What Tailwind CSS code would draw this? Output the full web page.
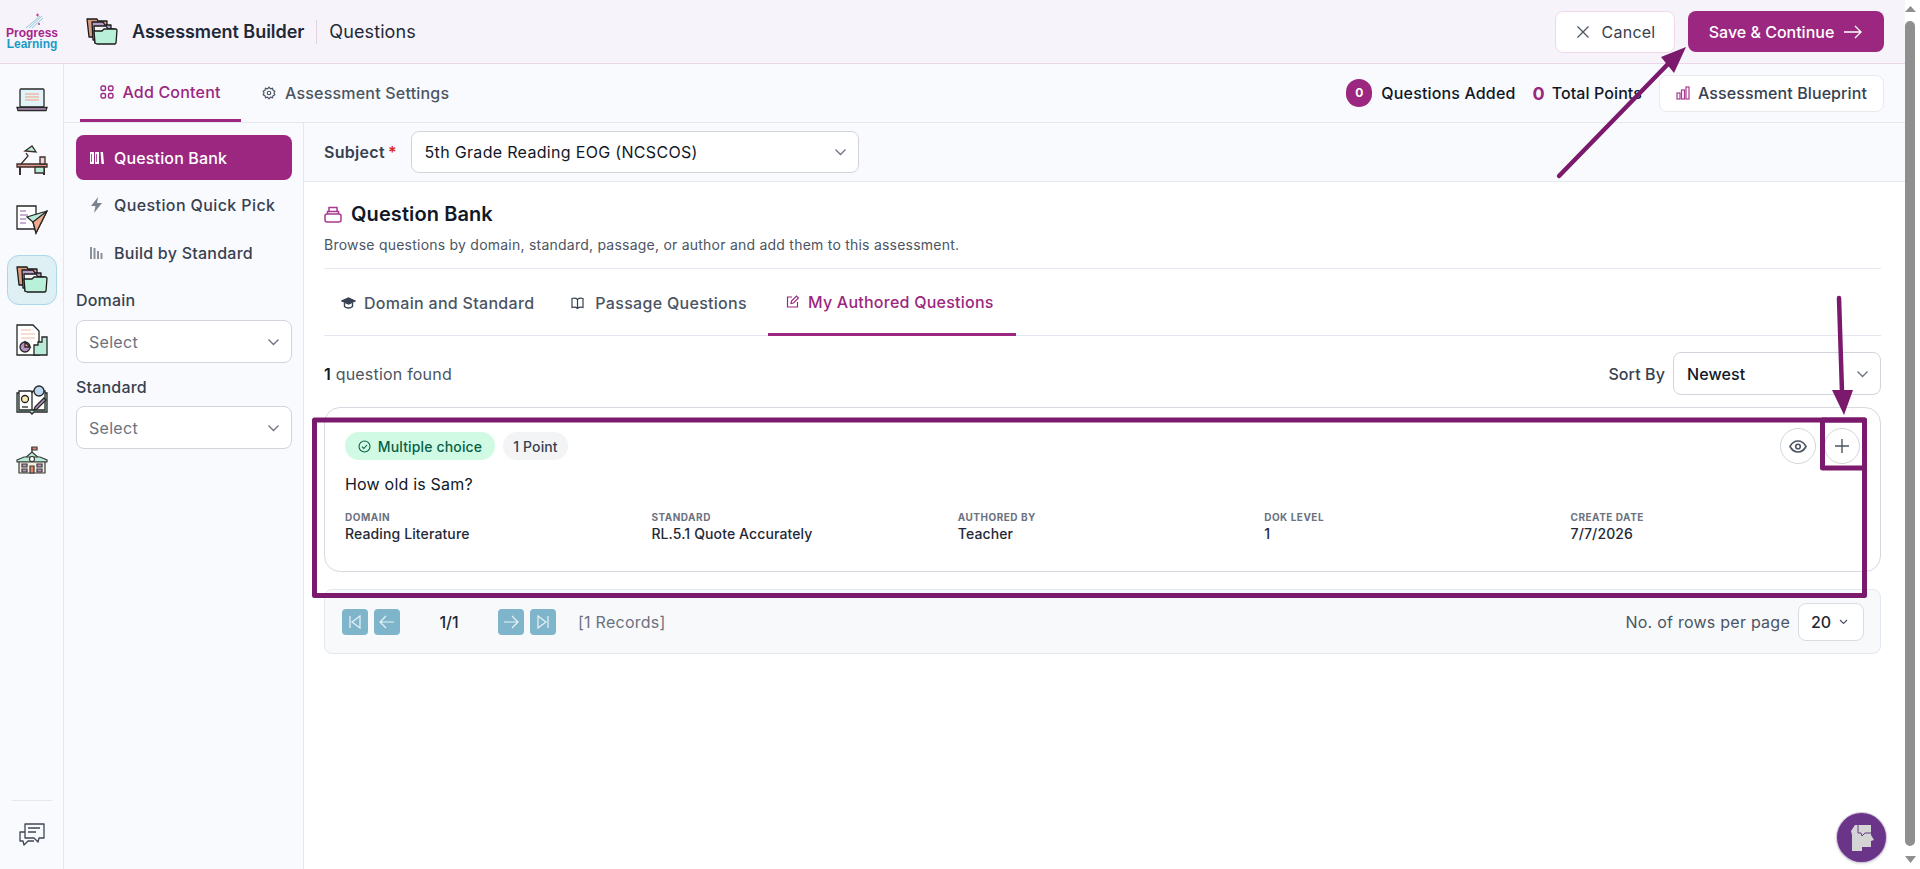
<!DOCTYPE html>
<html lang="en">
<head>
<meta charset="utf-8">
<title>Assessment Builder</title>
<script src="https://cdn.jsdelivr.net/npm/@tailwindcss/browser@4"></script>
</head>
<body class="font-['Inter',sans-serif] text-[#1f2937] bg-white">
<div class="relative flex w-[1920px] h-[869px] overflow-hidden">
  <div class="w-[1905px] h-[869px] flex flex-col">
    <!-- Header -->
    <header class="h-[64px] shrink-0 flex items-center justify-between pr-[21px] bg-[#f6f4fa] border-b border-[#ecd5e8]">
      <div class="flex items-center">
        <div class="relative w-[64px] h-[63px] flex flex-col items-center justify-end pb-[13px] font-['Liberation_Sans',sans-serif] font-bold text-[12px] leading-[11px]">
          <svg class="absolute left-[25px] top-[13px]" width="20" height="16" viewBox="0 0 20 16" fill="none"><path d="M1 15 15 3M4 15 17 3M7 15 18 5" stroke="#8fc7dc" stroke-width="1"/><path d="M11 2h3M12.500 .5v3" stroke="#c0399f" stroke-width="1"/><circle cx="14" cy="11" r="1" fill="#c0399f"/></svg>
          <span class="text-[#a8248c]">Progress</span>
          <span class="text-[#169cc6]">Learning</span>
        </div>
        <svg class="ml-[22px]" width="32" height="28" viewBox="0 0 32 28" fill="none" stroke="#1b1b1b" stroke-width="1.300" stroke-linejoin="round"><path d="M1 1h10l1 2h9v16H3z" fill="#d89a7c"/><path d="M6 4h11l2 3h6v15H7z" fill="#b69ac8"/><path d="M8 8h12l2 3h6v14H9z" fill="#f4f4f4"/><path d="M8 13h8l2-2h12l1 1-1 13-1 1H11l-2-1z" fill="#b9f0da"/></svg>
        <span class="ml-[14px] text-[18px] font-semibold tracking-[-0.05px] text-[#1f2937]">Assessment Builder</span>
        <span class="ml-[12px] w-px h-[24px] bg-[#e6d3e2]"></span>
        <span class="ml-[12px] text-[18px] tracking-[0.1px] text-[#1f2937]">Questions</span>
      </div>
      <div class="flex items-center gap-[13px]">
        <button class="w-[120px] h-[42px] rounded-lg bg-white border border-[#f0d8ec] flex items-center justify-center gap-[11px] text-[16px] tracking-[0.25px] text-[#374151]">
          <svg width="16" height="16" viewBox="0 0 16 16" fill="none" stroke="#4b5563" stroke-width="1.300"><path d="M2.500 2.500l11 11M13.500 2.500l-11 11"/></svg>Cancel</button>
        <button class="w-[196px] h-[41px] rounded-lg bg-[#9b2780] flex items-center justify-center gap-[9px] text-[16px] font-medium text-white">Save &amp; Continue
          <svg width="20" height="16" viewBox="0 0 20 16" fill="none" stroke="#fff" stroke-width="1.300"><path d="M1 8h17M12 2l6 6-6 6"/></svg></button>
      </div>
    </header>
    <div class="flex-1 flex min-h-0">
      <!-- Rail -->
      <nav class="w-[64px] shrink-0 flex flex-col items-center bg-[#f9fafd] border-r border-[#e3e7f0] pt-[6px]">
        <div class="h-[60px] flex items-center justify-center">
          <svg width="32" height="24" viewBox="0 0 32 24" fill="none" stroke="#2a2a2a" stroke-width="1.300"><rect x="4" y="1" width="24" height="18" rx="1" fill="#dff3f8"/><path d="M9 6h14M9 9h14M9 12h14" stroke="#f1b9a6"/><path d="M1 19.500h30l-1 3H2z" fill="#b593c2"/></svg>
        </div>
        <div class="h-[60px] flex items-center justify-center">
          <svg width="32" height="32" viewBox="0 0 32 32" fill="none" stroke="#3a2c2c" stroke-width="1.300"><path d="M1 20h30v3H1z" fill="#e39a84"/><path d="M4 23v8M28 23v8" stroke-width="2"/><path d="M19 23h9v6h-9z" fill="#b9ecd8"/><path d="M24 13h5v7h-5z" fill="#f2d7d0"/><path d="M5 20l7-8-2-3" /><path d="M9 7l7-5 4 6z" fill="#b9ecd8"/></svg>
        </div>
        <div class="h-[60px] flex items-center justify-center">
          <svg width="32" height="30" viewBox="0 0 32 30" fill="none" stroke="#262626" stroke-width="1.300"><path d="M1 1h19v23H1z" fill="#fff"/><path d="M4 6h6M4 10h8M4 14h6M4 18h6" stroke="#b593c2"/><path d="M31 6 11 12l6 5 3 11z" fill="#b9ecd8"/><path d="M31 6 17 17l3 11z" fill="#f0a88f"/></svg>
        </div>
        <div class="h-[60px] flex items-center justify-center">
          <div class="w-[50px] h-[50px] rounded-xl bg-[#dff0f4] border border-[#a9d9ea] flex items-center justify-center">
            <svg width="32" height="28" viewBox="0 0 32 28" fill="none" stroke="#1b1b1b" stroke-width="1.300" stroke-linejoin="round"><path d="M1 1h10l1 2h9v16H3z" fill="#d89a7c"/><path d="M6 4h11l2 3h6v15H7z" fill="#b69ac8"/><path d="M8 8h12l2 3h6v14H9z" fill="#f4f4f4"/><path d="M8 13h8l2-2h12l1 1-1 13-1 1H11l-2-1z" fill="#b9f0da"/></svg>
          </div>
        </div>
        <div class="h-[60px] flex items-center justify-center">
          <svg width="32" height="32" viewBox="0 0 32 32" fill="none" stroke="#262626" stroke-width="1.300"><path d="M1 1h16l6 6v24H1z" fill="#fff"/><path d="M5 6h10M5 10h14M5 14h14" stroke="#f3d4c6" stroke-width="1.500"/><circle cx="9" cy="23" r="5" fill="#b593c2"/><path d="M9 18l5 5H9z" fill="#f0a88f"/><path d="M18 31V21h4v-3h4v-5h5v18z" fill="#b9ecd8"/></svg>
        </div>
        <div class="h-[60px] flex items-center justify-center">
          <svg width="32" height="32" viewBox="0 0 32 32" fill="none" stroke="#262626" stroke-width="1.300"><path d="M1 9h30v19H18l-2 2-2-2H1z" fill="#b9ecd8"/><path d="M3 7h12l1 2v17H3zM16 9l1-2h12v19H16z" fill="#fff"/><circle cx="9" cy="15" r="3.500" fill="#fbeab8"/><path d="M6 23h6"/><circle cx="23" cy="7" r="5" fill="#bcd7ef"/><path d="M19 23l9-9 2 2-9 9-3 1z" fill="#b593c2"/></svg>
        </div>
        <div class="h-[60px] flex items-center justify-center">
          <svg width="32" height="28" viewBox="0 0 32 28" fill="none" stroke="#3a3a3a" stroke-width="1.200"><path d="M16 1v6" /><path d="M16 1h5v3h-5z" fill="#e0826b"/><path d="M8 13l8-7 8 7z" fill="#b9ecd8"/><path d="M1 14l7-3h16l7 3v2H1z" fill="#b9ecd8"/><path d="M3 16h26v11H3z" fill="#f4eede"/><circle cx="16" cy="13" r="2.500" fill="#fff"/><path d="M14 20h4v7h-4z" fill="#e0826b"/><path d="M6 18h5v3H6zM21 18h5v3h-5zM6 23h5v3H6zM21 23h5v3h-5z" fill="#b593c2"/></svg>
        </div>
        <div class="mt-auto w-[40px] border-t border-[#e3e7f0] h-[69px] flex items-center justify-center">
          <svg width="26" height="24" viewBox="0 0 26 24" fill="none" stroke="#3f4654" stroke-width="1.300" stroke-linejoin="round"><path d="M6 1h19v14h-5l-1 4-4-4H6z"/><path d="M9 5h12M9 9h8"/><path d="M6 9H1v9h3l1 4 4-4h6"/></svg>
        </div>
      </nav>
      <!-- Main -->
      <div class="flex-1 flex flex-col min-w-0 bg-[#f9fafd]">
        <div class="h-[59px] shrink-0 flex items-center justify-between border-b border-[#e3e7f0] pl-[16px] pr-[21px]">
          <div class="flex h-full">
            <div class="w-[161px] h-full flex items-center justify-center gap-[8px] border-b-[3px] border-[#9b2780] text-[#9b2780] text-[16px] font-medium tracking-[0.2px]">
              <svg width="14" height="14" viewBox="0 0 14 14" fill="none" stroke="#9b2780" stroke-width="1.400"><rect x="1" y="1" width="4.500" height="4.500" rx="1.500"/><rect x="8.500" y="1" width="4.500" height="4.500" rx="1.500"/><rect x="1" y="8.500" width="4.500" height="4.500" rx="1.500"/><rect x="8.500" y="8.500" width="4.500" height="4.500" rx="1.500"/></svg>
              Add Content</div>
            <div class="ml-[21px] flex items-center gap-[9px] text-[16px] font-medium tracking-[0.2px] text-[#4b5563]">
              <svg width="14" height="14" viewBox="0 0 24 24" fill="none" stroke="#4b5563" stroke-width="2"><circle cx="12" cy="12" r="3"/><path d="M12 2l2.500 3 3.500-1 1 3.500 3 1.500-1.500 3 1.500 3-3 1.500-1 3.500-3.500-1-2.500 3-2.500-3-3.500 1-1-3.500-3-1.500 1.500-3L2 9l3-1.500L6 4l3.500 1z"/></svg>
              Assessment Settings</div>
          </div>
          <div class="flex items-center">
            <span class="w-[26px] h-[28px] rounded-full bg-[#9b2780] text-white text-[12px] font-bold flex items-center justify-center">0</span>
            <span class="ml-[9px] text-[16px] font-medium tracking-[0.15px] text-[#111827]">Questions Added</span>
            <span class="ml-[17px] text-[18px] font-bold text-[#9b2780]">0</span>
            <span class="ml-[7px] text-[16px] font-medium tracking-[0.1px] text-[#111827]">Total Points</span>
            <button class="ml-[17px] w-[225px] h-[37px] rounded-lg bg-white border border-[#e8eaf0] flex items-center justify-center gap-[8px] text-[16px] font-medium tracking-[0.1px] text-[#374151]">
              <svg width="14" height="14" viewBox="0 0 14 14" fill="none" stroke="#a8398f" stroke-width="1.200"><rect x="1" y="7" width="3" height="6"/><rect x="5.500" y="4" width="3" height="9"/><rect x="10" y="1" width="3" height="12"/></svg>
              Assessment Blueprint</button>
          </div>
        </div>
        <div class="flex-1 flex min-h-0">
          <!-- Left panel -->
          <aside class="w-[240px] shrink-0 border-r border-[#e3e7f0] px-[12px] pt-[12px]">
            <div class="w-[216px] h-[45px] rounded-lg bg-[#9b2780] flex items-center pl-[14px] gap-[10px] text-white text-[16px] font-medium tracking-[0.15px]">
              <svg width="14" height="12" viewBox="0 0 14 12" fill="#fff"><rect x="0" y="0" width="4" height="12"/><rect x="5" y="0" width="4" height="12" /><path d="M10.500 0h2.500l1 12h-2.500z"/><path d="M1.500 2v8M6.500 2v8" stroke="#9b2780" stroke-width=".8"/></svg>
              Question Bank</div>
            <div class="h-[48px] mt-[1px] flex items-center pl-[14px] gap-[11px] text-[16px] font-medium tracking-[0.4px] text-[#374151]">
              <svg width="13" height="16" viewBox="0 0 13 16" fill="#7b8290" class="shrink-0"><path d="M8 0 1 9h4.500L4 16l8-10H7z"/></svg>
              Question Quick Pick</div>
            <div class="h-[48px] flex items-center pl-[14px] gap-[11px] text-[16px] font-medium tracking-[0.25px] text-[#374151]">
              <svg width="13" height="12" viewBox="0 0 13 12" fill="#8a909c" class="shrink-0"><rect x="0" y="0" width="2" height="12"/><rect x="3.500" y="1" width="2" height="11"/><rect x="7" y="4" width="2" height="8"/><rect x="10.500" y="6" width="2" height="6"/></svg>
              Build by Standard</div>
            <label class="block mt-[11px] text-[16px] font-medium tracking-[0.2px] text-[#374151] leading-[24px]">Domain</label>
            <div class="mt-[8px] w-[216px] h-[43px] rounded-lg bg-white border border-[#d1d5db] flex items-center justify-between pl-[12px] pr-[11px] text-[16px] tracking-[0.3px] text-[#6b7280]">Select
              <svg width="13" height="8" viewBox="0 0 13 8" fill="none" stroke="#6b7280" stroke-width="1.300"><path d="M1.500 1.500 6.500 6.500l5-5"/></svg></div>
            <label class="block mt-[12px] text-[16px] font-medium tracking-[0.2px] text-[#374151] leading-[24px]">Standard</label>
            <div class="mt-[7px] w-[216px] h-[43px] rounded-lg bg-white border border-[#d1d5db] flex items-center justify-between pl-[12px] pr-[11px] text-[16px] tracking-[0.3px] text-[#6b7280]">Select
              <svg width="13" height="8" viewBox="0 0 13 8" fill="none" stroke="#6b7280" stroke-width="1.300"><path d="M1.500 1.500 6.500 6.500l5-5"/></svg></div>
          </aside>
          <!-- Content -->
          <main class="flex-1 min-w-0 flex flex-col">
            <div class="h-[59px] shrink-0 border-b border-[#e3e7f0] flex items-center pl-[20px]">
              <span class="text-[16px] font-semibold tracking-[0.3px] text-[#374151]">Subject</span>
              <span class="ml-[3px] text-[16px] text-[#dc2626] font-semibold mr-[14px]">*</span>
              <div class="w-[448px] h-[42px] rounded-lg bg-white border border-[#d1d5db] flex items-center justify-between pl-[13px] pr-[11px] text-[16px] tracking-[0.32px] text-[#111827]">5th Grade Reading EOG (NCSCOS)
                <svg width="13" height="8" viewBox="0 0 13 8" fill="none" stroke="#6b7280" stroke-width="1.300"><path d="M1.500 1.500 6.500 6.500l5-5"/></svg></div>
            </div>
            <div class="flex-1 bg-white pl-[20px] pr-[24px] pt-[18px]">
              <div class="flex items-center h-[28px]">
                <svg width="18" height="17" viewBox="0 0 18 17" fill="none" stroke="#a8398f" stroke-width="1.500"><rect x="1" y="8" width="16" height="8" rx="2"/><path d="M3.500 8V5.500h11V8M5 5.500V1.500h8v4"/></svg>
                <span class="ml-[9px] text-[20px] font-semibold tracking-[0.1px] text-[#111827]">Question Bank</span>
              </div>
              <p class="mt-[7px] text-[14px] leading-[20px] tracking-[0.23px] text-[#4b5563]">Browse questions by domain, standard, passage, or author and add them to this assessment.</p>
              <div class="mt-[13px] border-t border-[#e3e7f0]"></div>
              <div class="h-[67px] flex border-b border-[#e3e7f0] pt-[1px]">
                <div class="ml-[17px] flex items-center gap-[8px] text-[16px] font-medium tracking-[0.3px] text-[#4b5563]">
                  <svg width="15" height="14" viewBox="0 0 15 14" fill="none" stroke="#374151" stroke-width="1.400"><path d="M1 5l6.500-3L14 5 7.500 8z" fill="#374151"/><path d="M3.500 7v3.500c2 2 6 2 8 0V7"/></svg>
                  Domain and Standard</div>
                <div class="ml-[37px] flex items-center gap-[11px] text-[16px] font-medium tracking-[0.3px] text-[#4b5563]">
                  <svg width="13" height="12" viewBox="0 0 13 12" fill="none" stroke="#374151" stroke-width="1.200"><path d="M6.500 2.500C5 1 3 1 1 1.500V10.500c2-.5 4-.5 5.500 1 1.500-1.500 3.500-1.500 5.500-1V1.500C10 1 8 1 6.500 2.500zM6.500 2.500v9"/></svg>
                  Passage Questions</div>
                <div class="ml-[21px] w-[248px] flex items-center gap-[9px] pl-[18px] text-[16px] font-medium tracking-[0.24px] text-[#9b2780] border-b-[3px] border-[#9b2780] -mb-px">
                  <svg width="13" height="13" viewBox="0 0 13 13" fill="none" stroke="#9b2780" stroke-width="1.200"><path d="M6 2H1.500v10h10V7"/><path d="M5 8.500 5.500 6 10.500 1l2 2-5 5z"/></svg>
                  My Authored Questions</div>
              </div>
              <div class="mt-[16px] h-[43px] flex items-center justify-between">
                <p class="text-[16px] tracking-[0.2px] text-[#4b5563]"><span class="font-semibold text-[#111827]">1</span> question found</p>
                <div class="flex items-center gap-[8px]">
                  <span class="text-[16px] font-medium tracking-[0.1px] text-[#374151]">Sort By</span>
                  <div class="w-[208px] h-[43px] rounded-lg bg-white border border-[#d1d5db] flex items-center justify-between pl-[13px] pr-[11px] text-[16px] font-medium tracking-[0.1px] text-[#111827]">Newest
                    <svg width="13" height="8" viewBox="0 0 13 8" fill="none" stroke="#6b7280" stroke-width="1.300"><path d="M1.500 1.500 6.500 6.500l5-5"/></svg></div>
                </div>
              </div>
              <!-- Card -->
              <article class="mt-[12px] h-[165px] rounded-2xl border border-[#d6d9df] pl-[20px] pr-[20px] pt-[20px]">
                <div class="flex items-center justify-between h-[36px] -mt-[0px]">
                  <div class="flex items-center gap-[8px]">
                    <span class="h-[28px] w-[150px] rounded-full bg-[#d1fae5] text-[#065f46] text-[14px] font-medium tracking-[0.15px] flex items-center justify-center gap-[7px]">
                      <svg width="13" height="13" viewBox="0 0 13 13" fill="none" stroke="#065f46" stroke-width="1.100"><circle cx="6.500" cy="6.500" r="5.500"/><path d="M4 6.700l1.800 1.800L9 5"/></svg>
                      Multiple choice</span>
                    <span class="h-[28px] w-[65px] rounded-full bg-[#f3f4f6] text-[#374151] text-[14px] font-medium tracking-[0.1px] flex items-center justify-center">1 Point</span>
                  </div>
                  <div class="flex items-center gap-[8px]">
                    <span class="w-[36px] h-[36px] rounded-full border border-[#d1d5db] flex items-center justify-center">
                      <svg width="18" height="13" viewBox="0 0 18 13" fill="none" stroke="#4b5563" stroke-width="1.600"><path d="M1 6.500C3 2.800 5.800 1 9 1s6 1.800 8 5.500C15 10.200 12.200 12 9 12S3 10.200 1 6.500z"/><circle cx="9" cy="6.500" r="2.300"/></svg></span>
                    <span class="w-[36px] h-[36px] rounded-full border border-[#d1d5db] flex items-center justify-center">
                      <svg width="16" height="16" viewBox="0 0 16 16" fill="none" stroke="#4b5563" stroke-width="1.400"><path d="M8 1v14M1 8h14"/></svg></span>
                  </div>
                </div>
                <p class="mt-[8px] text-[16px] leading-[24px] tracking-[0.2px] text-[#111827]">How old is Sam?</p>
                <dl class="mt-[14px] grid grid-cols-[repeat(5,306.4px)]">
                  <div><dt class="text-[10px] leading-[14px] font-bold tracking-[0.5px] text-[#6b7280]">DOMAIN</dt><dd class="text-[14px] leading-[20px] font-medium tracking-[0.12px] text-[#1f2937]">Reading Literature</dd></div>
                  <div><dt class="text-[10px] leading-[14px] font-bold tracking-[0.5px] text-[#6b7280]">STANDARD</dt><dd class="text-[14px] leading-[20px] font-medium tracking-[0.12px] text-[#1f2937]">RL.5.1 Quote Accurately</dd></div>
                  <div><dt class="text-[10px] leading-[14px] font-bold tracking-[0.5px] text-[#6b7280]">AUTHORED BY</dt><dd class="text-[14px] leading-[20px] font-medium tracking-[0.12px] text-[#1f2937]">Teacher</dd></div>
                  <div><dt class="text-[10px] leading-[14px] font-bold tracking-[0.5px] text-[#6b7280]">DOK LEVEL</dt><dd class="text-[14px] leading-[20px] font-medium tracking-[0.12px] text-[#1f2937]">1</dd></div>
                  <div><dt class="text-[10px] leading-[14px] font-bold tracking-[0.5px] text-[#6b7280]">CREATE DATE</dt><dd class="text-[14px] leading-[20px] font-medium tracking-[0.12px] text-[#1f2937]">7/7/2026</dd></div>
                </dl>
              </article>
              <!-- Pagination -->
              <div class="mt-[17px] h-[65px] rounded-lg bg-[#f8f9fb] border border-[#e3e7f0] flex items-center justify-between pl-[17px] pr-[16px]">
                <div class="flex items-center">
                  <span class="w-[26px] h-[26px] rounded bg-[#7fb5ca] flex items-center justify-center"><svg width="14" height="14" viewBox="0 0 14 14" fill="none" stroke="#e8f3f7" stroke-width="1.200"><path d="M2 1v12M12 1 4 7l8 6z"/></svg></span>
                  <span class="ml-[6px] w-[26px] h-[26px] rounded bg-[#7fb5ca] flex items-center justify-center"><svg width="16" height="14" viewBox="0 0 16 14" fill="none" stroke="#e8f3f7" stroke-width="1.200"><path d="M15 7H1M7 1 1 7l6 6"/></svg></span>
                  <span class="w-[98px] text-center text-[16px] font-medium text-[#1f2937]">1/1</span>
                  <span class="w-[26px] h-[26px] rounded bg-[#7fb5ca] flex items-center justify-center"><svg width="16" height="14" viewBox="0 0 16 14" fill="none" stroke="#e8f3f7" stroke-width="1.200"><path d="M1 7h14M9 1l6 6-6 6"/></svg></span>
                  <span class="ml-[6px] w-[26px] h-[26px] rounded bg-[#7fb5ca] flex items-center justify-center"><svg width="14" height="14" viewBox="0 0 14 14" fill="none" stroke="#e8f3f7" stroke-width="1.200"><path d="M12 1v12M2 1l8 6-8 6z"/></svg></span>
                  <span class="ml-[22px] text-[16px] tracking-[0.25px] text-[#6b7280]">[1 Records]</span>
                </div>
                <div class="flex items-center gap-[8px]">
                  <span class="text-[16px] tracking-[0.25px] text-[#4b5563]">No. of rows per page</span>
                  <div class="w-[66px] h-[38px] rounded-lg bg-white border border-[#d9dce2] flex items-center pl-[12px] gap-[8px] text-[16px] font-medium text-[#1f2937]">20
                    <svg width="9" height="6" viewBox="0 0 9 6" fill="none" stroke="#4b5563" stroke-width="1.200"><path d="M1 1l3.500 3.500L8 1"/></svg></div>
                </div>
              </div>
            </div>
          </main>
        </div>
      </div>
    </div>
  </div>
  <!-- Scrollbar -->
  <div class="w-[15px] h-[869px] shrink-0 bg-white flex flex-col items-start">
    <svg width="11" height="17" viewBox="0 0 11 17" fill="#8f8f8f"><path d="M0 12 5.500 6 11 12z"/></svg>
    <div class="w-[10px] flex-1 rounded-[5px] bg-[#8f8f8f] mt-[4px] mb-[5px]"></div>
    <svg width="11" height="18" viewBox="0 0 11 18" fill="#8f8f8f"><path d="M0 5 5.500 12 11 5z"/></svg>
  </div>
  <!-- Help bubble -->
  <div class="absolute left-[1836px] top-[812px] w-[51px] h-[51px] rounded-full bg-[#6a3588] border border-white/70 shadow flex items-center justify-center">
    <svg width="26" height="28" viewBox="0 0 26 28" fill="#d4d4d4"><path d="M6 1h16v10l3 5-3 1v6h-9v4H3V11L2 7z"/><path d="M9 1v8h3l1 3 3-3h6" fill="none" stroke="#6a3588" stroke-width="1"/></svg>
  </div>
  <!-- Annotation overlay -->
  <svg class="absolute left-0 top-0 pointer-events-none" width="1920" height="869" viewBox="0 0 1920 869" fill="none">
    <rect x="314.500" y="420" width="1550" height="175.500" stroke="#7b1a6c" stroke-width="5" stroke-linejoin="round"/>
    <rect x="1822.500" y="420" width="42" height="48" stroke="#7b1a6c" stroke-width="5" stroke-linejoin="round"/>
    <path d="M1559 176 1668 64" stroke="#7b1a6c" stroke-width="4.500" stroke-linecap="round"/>
    <path d="M1686 47 1661 57 1674 73z" fill="#7b1a6c"/>
    <path d="M1839 298 1842 392" stroke="#7b1a6c" stroke-width="4.500" stroke-linecap="round"/>
    <path d="M1832 390H1853L1844 415z" fill="#7b1a6c"/>
  </svg>
</div>
</body>
</html>
